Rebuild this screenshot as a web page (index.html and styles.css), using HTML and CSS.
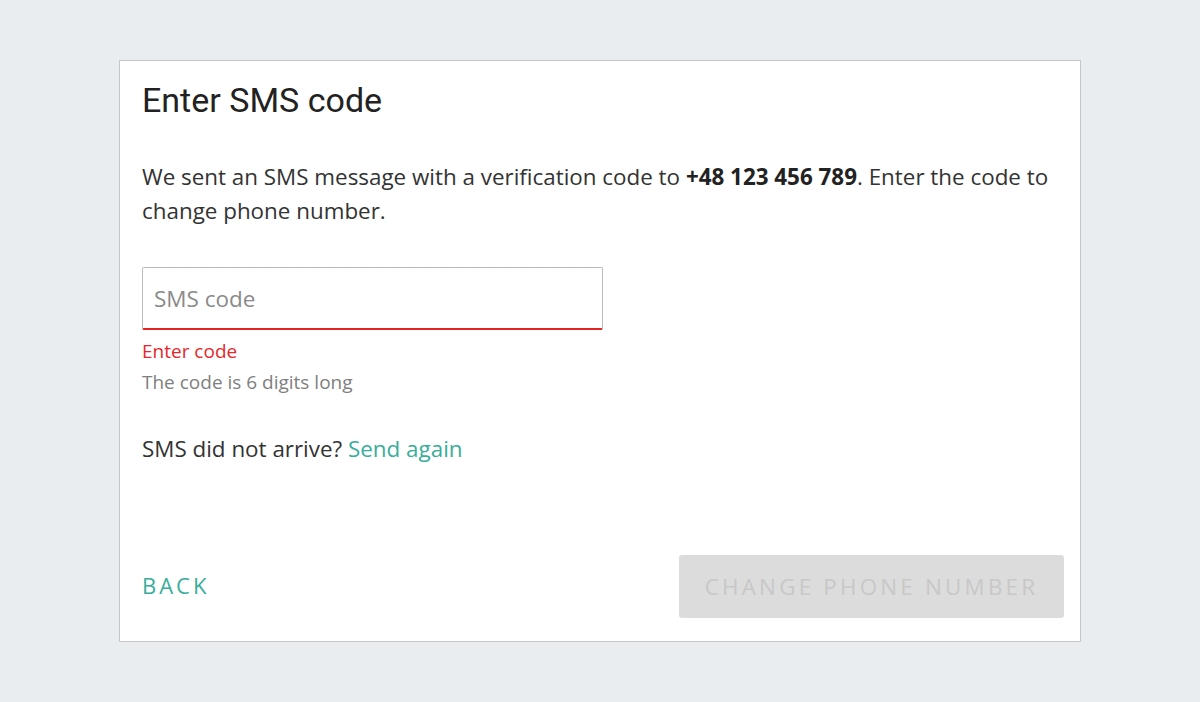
FILE: index.html
```html
<!DOCTYPE html>
<html>
<head>
    <title>Enter SMS code</title>
    <link rel="stylesheet" href="styles.css">
</head>
<body>
    <div class="dialog">
        <h1>Enter SMS code</h1>

        <p class="intro">We sent an SMS message with a verification code to <b>+48 123 456 789</b>. Enter the code to change phone number.</p>

        <div class="field">
            <input type="text" class="code-input" placeholder="SMS code">
            <div class="error">Enter code</div>
            <div class="hint">The code is 6 digits long</div>
        </div>

        <p class="resend">SMS did not arrive? <a href="#">Send again</a></p>

        <div class="actions">
            <button class="btn-back">Back</button>
            <button class="btn-submit" disabled>Change phone number</button>
        </div>
    </div>
</body>
</html>
```

FILE: styles.css
```css
body {
    margin: 0;
    background-color: #e9edf0;
    font-family: "Open Sans", sans-serif;
    color: #333;
}

.dialog {
    box-sizing: border-box;
    width: 962px;
    margin: 60px auto 0;
    padding: 19px 16px 23px 22px;
    background-color: #fff;
    border: 1px solid #c4c6c8;
}

h1 {
    margin: 0;
    font-family: Roboto, sans-serif;
    font-weight: 400;
    font-size: 34px;
    line-height: 40px;
    color: #222;
}

.intro {
    margin: 40px 0 0;
    font-size: 22.4px;
    line-height: 34px;
}

.intro b {
    font-weight: 700;
    color: #222;
}

.field {
    margin-top: 39px;
}

.code-input {
    box-sizing: border-box;
    display: block;
    width: 461px;
    height: 63px;
    padding: 0 11px;
    font-family: "Open Sans", sans-serif;
    font-size: 22.5px;
    color: #333;
    border: 1px solid #b9bbbd;
    border-bottom: 2px solid #e32222;
    border-radius: 2px;
    outline: none;
}

.code-input::placeholder {
    color: #8a8a8a;
}

.error {
    margin-top: 8px;
    font-size: 19px;
    line-height: 26px;
    color: #e8262b;
}

.hint {
    margin-top: 5px;
    font-size: 19px;
    line-height: 26px;
    color: #808080;
}

.resend {
    margin: 38px 0 0;
    font-size: 22.4px;
    line-height: 32px;
}

.resend a {
    color: #39ad9b;
    text-decoration: none;
}

.actions {
    display: flex;
    justify-content: space-between;
    align-items: center;
    margin-top: 90px;
}

.btn-back {
    padding: 0 0 3px;
    font-family: "Open Sans", sans-serif;
    font-size: 22px;
    letter-spacing: 3px;
    text-transform: uppercase;
    color: #39ad9b;
    background: none;
    border: none;
    cursor: pointer;
}

.btn-submit {
    width: 385px;
    height: 63px;
    font-family: "Open Sans", sans-serif;
    font-size: 22.4px;
    letter-spacing: 3.2px;
    text-transform: uppercase;
    color: #c8c8c8;
    background-color: #dcdcdc;
    border: none;
    border-radius: 3px;
}
```
